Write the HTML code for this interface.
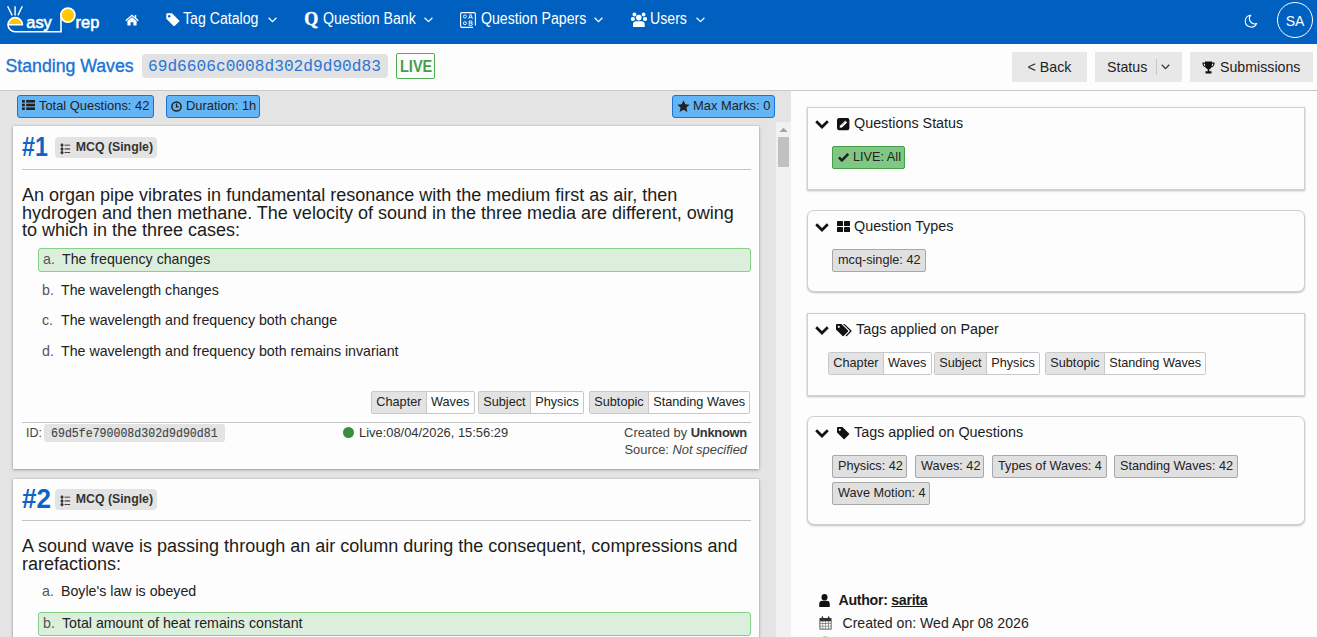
<!DOCTYPE html>
<html><head><meta charset="utf-8">
<style>
*{box-sizing:border-box;margin:0;padding:0}
html,body{width:1317px;height:637px;overflow:hidden;background:#fdfdfd;font-family:"Liberation Sans",sans-serif;color:#212121}
.abs{position:absolute}
.nav{position:absolute;left:0;top:0;width:1317px;height:44px;background:#0060c0;color:#fff}
.nav .t{position:absolute;top:10.6px;font-size:15.8px;line-height:16px;white-space:nowrap;transform:scaleX(0.895);transform-origin:0 0}
.chev{position:absolute;top:17px}
.hdr{position:absolute;left:0;top:44px;width:1317px;height:46px}
.left{position:absolute;left:0;top:90px;width:791px;height:547px;background:#e4e4e4;border-top:1px solid #c9c9c9}
.bdg{position:absolute;top:4px;height:23px;background:#64b5f6;border:1px solid #1a73d8;border-radius:3px;font-size:12.9px;line-height:19.6px;white-space:nowrap;color:#222}
.card{position:absolute;left:13px;width:746px;background:#fdfdfd;box-shadow:0 1px 3px rgba(0,0,0,.3),0 0 1px rgba(0,0,0,.25)}
.num{position:absolute;left:9px;font-weight:bold;font-size:28px;color:#0d63c8;line-height:28px;transform:scaleX(0.83);transform-origin:0 0}
.mcq{position:absolute;left:42px;width:102px;height:21px;background:#e3e3e3;border-radius:4px;font-weight:bold;font-size:12.3px;line-height:21px;color:#333;white-space:nowrap}
.hr{position:absolute;left:9px;width:729px;height:1px;background:#c4c4c4}
.q{position:absolute;left:9px;width:729px;font-size:18px;line-height:17.6px;color:#1c1c1c}
.opt{position:absolute;left:25px;width:713px;height:24px;font-size:14.2px;line-height:22px;white-space:nowrap;color:#222}
.opt.ok{background:#dcefdc;border:1px solid #86cf86;border-radius:3px}
.opt .l{position:absolute;left:4px;top:0;color:#555}
.opt .x{position:absolute;left:23px;top:0}
.opt.ok .l,.opt.ok .x{top:-1px}
.tg{position:absolute;top:0;height:23px;border:1px solid #c8c8c8;border-radius:2px;display:flex;font-size:12.7px;line-height:21px;white-space:nowrap;overflow:hidden}
.tg span{padding:0 4.3px;background:#fdfdfd}
.tg span:first-child{background:#e3e3e3;border-right:1px solid #c8c8c8}
.rc{position:absolute;left:807px;width:498px;background:#fdfdfd;border:1px solid #cfcfcf;box-shadow:0 1px 2px rgba(0,0,0,.25)}
.rc.rd{border-radius:7px}
.rt{position:absolute;top:7.3px;left:0;font-size:14.35px;line-height:17px;white-space:nowrap;color:#1c1c1c}
.gb{position:absolute;height:23px;background:#e0e0e0;border:1px solid #a8a8a8;border-radius:2px;font-size:12.7px;line-height:21px;white-space:nowrap;padding:0 5px;color:#222}
</style></head><body>

<!-- NAVBAR -->
<div class="nav">
  <svg class="abs" style="left:0;top:0" width="110" height="44" viewBox="0 0 110 44">
    <g stroke="#fff" stroke-width="1.4" fill="none" stroke-linecap="butt">
      <line x1="7.6" y1="6.2" x2="12.2" y2="15.4"/>
      <line x1="15.1" y1="6.2" x2="15.1" y2="15.4"/>
      <line x1="22.3" y1="6.2" x2="17.9" y2="15.4"/>
    </g>
    <path d="M8.2 24.6 A7 7 0 0 1 22.2 24.6 Z" fill="#ffc800"/>
    <path d="M8 24.8 A7.2 7.2 0 0 1 22.4 24.8 L8 24.8 A7.2 7.2 0 0 0 15.2 31.8 L61 31.8 L61 13" stroke="#fff" stroke-width="1.6" fill="none"/>
    <circle cx="67.9" cy="15.1" r="7" fill="#ffc800" stroke="#fff" stroke-width="1.8"/>
    <text x="26.3" y="27.6" font-family="Liberation Sans" font-size="16.4" fill="#fff" stroke="#fff" stroke-width="0.55">asy</text>
    <text x="75.6" y="27.6" font-family="Liberation Sans" font-size="16.4" fill="#fff" stroke="#fff" stroke-width="0.55">rep</text>
  </svg>
  <!-- home -->
  <svg class="abs" style="left:125px;top:14px" width="14" height="12" viewBox="0 0 14 12"><path d="M7 0.5 L0.3 6.3 L1.2 7.2 L7 2.3 L12.8 7.2 L13.7 6.3 L11.2 4.1 L11.2 1 L9.8 1 L9.8 2.9 Z M2.4 7 L7 3.2 L11.6 7 L11.6 11.6 L8.4 11.6 L8.4 8.2 L5.6 8.2 L5.6 11.6 L2.4 11.6 Z" fill="#fff"/></svg>
  <!-- tag -->
  <svg class="abs" style="left:166px;top:13px" width="14" height="13" viewBox="0 0 14 13"><path d="M0.3 1.6 Q0.3 0.3 1.6 0.3 L6 0.3 L13.2 7.5 Q13.7 8 13.2 8.6 L8.6 13 Q8 13.5 7.5 13 L0.3 5.8 Z" fill="#fff"/><circle cx="3.2" cy="3.2" r="1.2" fill="#0060c0"/></svg>
  <div class="t" style="left:183px">Tag Catalog</div>
  <svg class="chev" style="left:268px" width="9" height="6" viewBox="0 0 9 6"><path d="M0.6 0.8 L4.5 4.6 L8.4 0.8" stroke="#fff" stroke-width="1.3" fill="none"/></svg>
  <div class="abs" style="left:304.3px;top:8.5px;font-family:'Liberation Serif',serif;font-weight:bold;font-size:18px;line-height:20px;-webkit-text-stroke:0.4px #fff">Q</div>
  <div class="t" style="left:323px">Question Bank</div>
  <svg class="chev" style="left:424px" width="9" height="6" viewBox="0 0 9 6"><path d="M0.6 0.8 L4.5 4.6 L8.4 0.8" stroke="#fff" stroke-width="1.3" fill="none"/></svg>
  <!-- paper icon -->
  <svg class="abs" style="left:460px;top:12px" width="16" height="16" viewBox="0 0 16 16"><path d="M13 15.4 L2 15.4 Q0.6 15.4 0.6 14 L0.6 2 Q0.6 0.6 2 0.6 L14 0.6 Q15.4 0.6 15.4 2 L15.4 13.4" stroke="#fff" stroke-width="1.1" fill="none"/><circle cx="4.9" cy="4.5" r="1.5" stroke="#fff" stroke-width="0.9" fill="none"/><circle cx="4.9" cy="11.2" r="1.5" stroke="#fff" stroke-width="0.9" fill="none"/><path d="M8.8 6.8 L10.3 2.2 L10.9 2.2 L12.4 6.8 M9.3 5.3 L11.9 5.3" stroke="#fff" stroke-width="0.9" fill="none"/><path d="M9.2 9 L11 9 Q12.2 9 12.2 10 Q12.2 11 11 11 Q12.4 11 12.4 12.2 Q12.4 13.4 11 13.4 L9.2 13.4 Z M9.2 11 L11 11" stroke="#fff" stroke-width="0.9" fill="none"/></svg>
  <div class="t" style="left:480.5px">Question Papers</div>
  <svg class="chev" style="left:594px" width="9" height="6" viewBox="0 0 9 6"><path d="M0.6 0.8 L4.5 4.6 L8.4 0.8" stroke="#fff" stroke-width="1.3" fill="none"/></svg>
  <!-- users -->
  <svg class="abs" style="left:630px;top:12px" width="17" height="15" viewBox="0 0 17 15"><g fill="#fff"><circle cx="4.4" cy="2.5" r="1.9"/><circle cx="13.6" cy="2.5" r="1.9"/><ellipse cx="2.9" cy="6.9" rx="2.1" ry="2"/><ellipse cx="15" cy="6.9" rx="2.1" ry="2"/><circle cx="8.8" cy="5.6" r="2.8"/><path d="M3 14.4 L3 12.4 Q3 9.2 6.4 9.2 L11.3 9.2 Q14.7 9.2 14.7 12.4 L14.7 14.4 Q14.7 15 14.1 15 L3.6 15 Q3 15 3 14.4 Z"/></g></svg>
  <div class="t" style="left:650px">Users</div>
  <svg class="chev" style="left:695.5px" width="9" height="6" viewBox="0 0 9 6"><path d="M0.6 0.8 L4.5 4.6 L8.4 0.8" stroke="#fff" stroke-width="1.3" fill="none"/></svg>
  <!-- moon -->
  <svg class="abs" style="left:1244px;top:13.6px" width="14" height="14" viewBox="0 0 14 14"><path d="M6.8 1.2 A5.9 5.9 0 1 0 12.6 9.5 A5.2 5.2 0 0 1 6.8 1.2 Z" stroke="#fff" stroke-width="1.1" fill="none" stroke-linejoin="round"/></svg>
  <div class="abs" style="left:1277px;top:2px;width:36px;height:36px;border:1px solid #fff;border-radius:50%;font-size:14px;line-height:36px;text-align:center">SA</div>
</div>

<!-- HEADER -->
<div class="abs" style="left:5.5px;top:55px;font-size:17.7px;line-height:22px;color:#1a73d6;-webkit-text-stroke:0.35px #1a73d6;white-space:nowrap">Standing Waves</div>
<div class="abs" style="left:142px;top:54px;width:246px;height:24px;background:#e2e2e2;border-radius:4px"><span class="abs" style="left:6.3px;top:0;font-family:'Liberation Mono',monospace;font-size:17.4px;line-height:25.5px;color:#2a76d6;transform:scaleX(0.93);transform-origin:0 0;white-space:nowrap">69d6606c0008d302d9d90d83</span></div>
<div class="abs" style="left:396px;top:53px;width:39px;height:26px;border:1px solid #4caf50;border-radius:2px"><span class="abs" style="left:3px;top:1.5px;font-weight:bold;font-size:16.6px;line-height:22px;color:#43a047;transform:scaleX(0.875);transform-origin:0 0">LIVE</span></div>
<div class="abs" style="left:1012px;top:52px;width:75px;height:30px;background:#e8e8e8;font-size:14.2px;line-height:30px;text-align:center;color:#222">&lt; Back</div>
<div class="abs" style="left:1095px;top:52px;width:87px;height:30px;background:#e8e8e8;font-size:14.2px;line-height:30px;color:#222"><span class="abs" style="left:12px;top:0">Status</span><span class="abs" style="left:61px;top:7px;width:1px;height:16px;background:#c6c6c6"></span><svg class="abs" style="left:66px;top:12px" width="9" height="6" viewBox="0 0 9 6"><path d="M0.8 0.8 L4.5 4.6 L8.2 0.8" stroke="#333" stroke-width="1.3" fill="none"/></svg></div>
<div class="abs" style="left:1190px;top:52px;width:123px;height:30px;background:#e8e8e8;font-size:14.2px;line-height:30px;color:#222"><svg class="abs" style="left:12px;top:9px" width="13" height="13" viewBox="0 0 13 13"><path d="M3 0.5 L10 0.5 L10 1.5 L12.6 1.5 Q12.8 5.6 9.3 6.4 Q8.5 8 7.3 8.3 L7.3 10.3 L9.5 10.3 L9.5 12.5 L3.5 12.5 L3.5 10.3 L5.7 10.3 L5.7 8.3 Q4.5 8 3.7 6.4 Q0.2 5.6 0.4 1.5 L3 1.5 Z M1.6 2.7 Q1.8 4.7 3.2 5.2 L3 2.7 Z M11.4 2.7 L10 2.7 L9.8 5.2 Q11.2 4.7 11.4 2.7 Z" fill="#111"/></svg><span class="abs" style="left:30px;top:0">Submissions</span></div>

<div class="abs" style="left:0;top:90px;width:1317px;height:1px;background:#c9c9c9"></div>
<!-- LEFT PANEL -->
<div class="left">
  <div class="bdg" style="left:17px;width:137px"><svg class="abs" style="left:4px;top:4px" width="13" height="10" viewBox="0 0 13 10"><g fill="#222"><rect x="0" y="0" width="2.8" height="2.6"/><rect x="0" y="3.7" width="2.8" height="2.6"/><rect x="0" y="7.4" width="2.8" height="2.6"/><rect x="4.2" y="0" width="8.8" height="2.6"/><rect x="4.2" y="3.7" width="8.8" height="2.6"/><rect x="4.2" y="7.4" width="8.8" height="2.6"/></g></svg><span class="abs" style="left:21px;top:0">Total Questions: 42</span></div>
  <div class="bdg" style="left:166px;width:94px"><svg class="abs" style="left:4px;top:5px" width="11" height="11" viewBox="0 0 11 11"><circle cx="5.5" cy="5.5" r="4.6" stroke="#222" stroke-width="1.5" fill="none"/><path d="M5.5 2.6 L5.5 5.8 L7.6 5.8" stroke="#222" stroke-width="1.3" fill="none"/></svg><span class="abs" style="left:19px;top:0">Duration: 1h</span></div>
  <div class="bdg" style="left:672px;width:103px"><svg class="abs" style="left:4px;top:4px" width="13" height="13" viewBox="0 0 13 13"><path d="M6.5 0.3 L8.3 4.3 L12.7 4.7 L9.4 7.6 L10.4 12 L6.5 9.7 L2.6 12 L3.6 7.6 L0.3 4.7 L4.7 4.3 Z" fill="#222"/></svg><span class="abs" style="left:20px;top:0">Max Marks: 0</span></div>

  <!-- scroll area clip -->
  <div class="abs" style="left:0;top:31px;width:791px;height:516px;overflow:hidden">
    <!-- scrollbar -->
    <div class="abs" style="left:776px;top:0;width:15px;height:516px;background:#f1f1f1"></div>
    <svg class="abs" style="left:779px;top:5px" width="9" height="6" viewBox="0 0 9 6"><path d="M0.5 5 L4.5 0.8 L8.5 5 Z" fill="#a3a3a3"/></svg>
    <div class="abs" style="left:778px;top:15px;width:11px;height:30px;background:#c1c1c1"></div>

    <!-- CARD 1 (top at 126 abs => 126-122=4) -->
    <div class="card" style="top:4px;height:343px">
      <div class="num" style="top:6.7px">#1</div>
      <div class="mcq" style="top:11px"><svg class="abs" style="left:4.5px;top:5.5px" width="11" height="12" viewBox="0 0 11 12"><g fill="#333"><circle cx="2" cy="2.1" r="1.5"/><circle cx="2" cy="5.9" r="1.5"/><circle cx="2" cy="9.6" r="1.5"/><rect x="1.6" y="0.5" width="0.8" height="10.8"/><rect x="4.5" y="1.7" width="5.6" height="0.9"/><rect x="4.5" y="5.4" width="5.6" height="1.1"/><rect x="4.5" y="9.1" width="5.6" height="0.9"/></g></svg><span class="abs" style="left:20.8px;top:0">MCQ (Single)</span></div>
      <div class="hr" style="top:43px"></div>
      <div class="q" style="top:61px">An organ pipe vibrates in fundamental resonance with the medium first as air, then hydrogen and then methane. The velocity of sound in the three media are different, owing to which in the three cases:</div>
      <div class="opt ok" style="top:122px"><span class="l">a.</span><span class="x">The frequency changes</span></div>
      <div class="opt" style="top:153px"><span class="l">b.</span><span class="x">The wavelength changes</span></div>
      <div class="opt" style="top:183px"><span class="l">c.</span><span class="x">The wavelength and frequency both change</span></div>
      <div class="opt" style="top:214px"><span class="l">d.</span><span class="x">The wavelength and frequency both remains invariant</span></div>
      <div class="tg" style="left:358px;top:265px"><span>Chapter</span><span>Waves</span></div>
      <div class="tg" style="left:465px;top:265px"><span>Subject</span><span>Physics</span></div>
      <div class="tg" style="left:576px;top:265px"><span>Subtopic</span><span>Standing Waves</span></div>
      <div class="hr" style="top:296px"></div>
      <div class="abs" style="left:13px;top:299px;font-size:12.5px;line-height:17px;color:#444">ID:</div>
      <div class="abs" style="left:31px;top:298px;width:181px;height:18px;background:#e3e3e3;border-radius:3px"><span class="abs" style="left:6.5px;top:0;font-family:'Liberation Mono',monospace;font-size:13.3px;line-height:19px;color:#444;-webkit-text-stroke:0.15px #444;transform:scaleX(0.87);transform-origin:0 0;white-space:nowrap">69d5fe790008d302d9d90d81</span></div>
      <div class="abs" style="left:330px;top:301px;width:11px;height:11px;border-radius:50%;background:#388e3c"></div>
      <div class="abs" style="left:346px;top:298px;font-size:12.9px;line-height:17px;color:#333;white-space:nowrap">Live:08/04/2026, 15:56:29</div>
      <div class="abs" style="right:12px;top:298px;font-size:12.9px;line-height:17px;color:#444;white-space:nowrap;text-align:right">Created by <b style="color:#333;letter-spacing:-0.25px">Unknown</b><br>Source: <i>Not specified</i></div>
    </div>

    <!-- CARD 2 -->
    <div class="card" style="top:357px;height:200px">
      <div class="num" style="top:5.8px;transform:scaleX(0.93)">#2</div>
      <div class="mcq" style="top:10px"><svg class="abs" style="left:4.5px;top:5.5px" width="11" height="12" viewBox="0 0 11 12"><g fill="#333"><circle cx="2" cy="2.1" r="1.5"/><circle cx="2" cy="5.9" r="1.5"/><circle cx="2" cy="9.6" r="1.5"/><rect x="1.6" y="0.5" width="0.8" height="10.8"/><rect x="4.5" y="1.7" width="5.6" height="0.9"/><rect x="4.5" y="5.4" width="5.6" height="1.1"/><rect x="4.5" y="9.1" width="5.6" height="0.9"/></g></svg><span class="abs" style="left:20.8px;top:0">MCQ (Single)</span></div>
      <div class="hr" style="top:41px"></div>
      <div class="q" style="top:59px">A sound wave is passing through an air column during the consequent, compressions and rarefactions:</div>
      <div class="opt" style="top:101px"><span class="l">a.</span><span class="x">Boyle's law is obeyed</span></div>
      <div class="opt ok" style="top:133px"><span class="l">b.</span><span class="x">Total amount of heat remains constant</span></div>
    </div>
  </div>
</div>

<!-- RIGHT PANEL -->
<div class="rc" style="top:107px;height:83px">
  <svg class="abs" style="left:7px;top:11.6px" width="14" height="9" viewBox="0 0 14 9"><path d="M1.2 1.3 L7 7 L12.8 1.3" stroke="#111" stroke-width="2.7" fill="none"/></svg>
  <svg class="abs" style="left:29px;top:9.8px" width="13" height="13" viewBox="0 0 13 13"><rect x="0" y="0" width="12.4" height="12.2" rx="2.2" fill="#111"/><path d="M2.6 9.8 L3.1 7.6 L8.2 2.5 L10.1 4.4 L5 9.5 Z" fill="#fff"/><path d="M4.2 7.3 L8.4 3.1" stroke="#111" stroke-width="0.5"/></svg>
  <div class="rt" style="left:46px">Questions Status</div>
  <div class="gb" style="left:24px;top:38px;width:73px;background:#81c784;border-color:#43a047"><svg class="abs" style="left:5px;top:6px" width="11" height="9" viewBox="0 0 11 9"><path d="M0.9 4.3 L3.9 7.3 L10.3 0.9" stroke="#222" stroke-width="2.6" fill="none"/></svg><span class="abs" style="left:20px;top:0">LIVE: All</span></div>
</div>
<div class="rc rd" style="top:210px;height:82px">
  <svg class="abs" style="left:7px;top:11.6px" width="14" height="9" viewBox="0 0 14 9"><path d="M1.2 1.3 L7 7 L12.8 1.3" stroke="#111" stroke-width="2.7" fill="none"/></svg>
  <svg class="abs" style="left:29px;top:10px" width="13" height="12" viewBox="0 0 13 12"><g fill="#111"><rect x="0" y="0" width="6" height="5" rx="0.6"/><rect x="7" y="0" width="6" height="5" rx="0.6"/><rect x="0" y="6" width="6" height="5" rx="0.6"/><rect x="7" y="6" width="6" height="5" rx="0.6"/></g></svg>
  <div class="rt" style="left:46px">Question Types</div>
  <div class="gb" style="left:24px;top:38px;width:94px">mcq-single: 42</div>
</div>
<div class="rc" style="top:313px;height:83px">
  <svg class="abs" style="left:7px;top:11.6px" width="14" height="9" viewBox="0 0 14 9"><path d="M1.2 1.3 L7 7 L12.8 1.3" stroke="#111" stroke-width="2.7" fill="none"/></svg>
  <svg class="abs" style="left:28px;top:10px" width="17" height="13" viewBox="0 0 17 13"><path d="M0 1 Q0 0 1 0 L5.4 0 L12 6.6 Q12.5 7.1 12 7.6 L7.6 12 Q7.1 12.5 6.6 12 L0 5.4 Z" fill="#111"/><circle cx="2.8" cy="2.8" r="1.1" fill="#fdfdfd"/><path d="M7 0 L8.6 0 L15.4 6.6 Q15.9 7.1 15.4 7.6 L11 12 Q10.5 12.5 10 12 L9.6 11.6 L13.6 7.6 Q14.1 7.1 13.6 6.6 Z" fill="#111"/></svg>
  <div class="rt" style="left:48px">Tags applied on Paper</div>
  <div class="tg" style="left:20px;top:38px"><span>Chapter</span><span>Waves</span></div>
  <div class="tg" style="left:126px;top:38px"><span>Subject</span><span>Physics</span></div>
  <div class="tg" style="left:237px;top:38px"><span>Subtopic</span><span>Standing Waves</span></div>
</div>
<div class="rc rd" style="top:416px;height:109px">
  <svg class="abs" style="left:7px;top:11.6px" width="14" height="9" viewBox="0 0 14 9"><path d="M1.2 1.3 L7 7 L12.8 1.3" stroke="#111" stroke-width="2.7" fill="none"/></svg>
  <svg class="abs" style="left:28.5px;top:10px" width="14" height="13" viewBox="0 0 14 13"><path d="M0 1 Q0 0 1 0 L5.4 0 L12 6.6 Q12.5 7.1 12 7.6 L7.6 12 Q7.1 12.5 6.6 12 L0 5.4 Z" fill="#111"/><circle cx="2.8" cy="2.8" r="1.1" fill="#fdfdfd"/></svg>
  <div class="rt" style="left:46px">Tags applied on Questions</div>
  <div class="gb" style="left:24px;top:38px;width:75px">Physics: 42</div>
  <div class="gb" style="left:107px;top:38px;width:69px">Waves: 42</div>
  <div class="gb" style="left:184px;top:38px;width:115px">Types of Waves: 4</div>
  <div class="gb" style="left:306px;top:38px;width:124px">Standing Waves: 42</div>
  <div class="gb" style="left:24px;top:65px;width:98px">Wave Motion: 4</div>
</div>

<!-- author -->
<svg class="abs" style="left:818.5px;top:593.5px" width="11" height="13" viewBox="0 0 11 13"><ellipse cx="5.5" cy="3.2" rx="3" ry="3.2" fill="#111"/><path d="M0.2 12.6 L0.2 10.2 Q0.2 6.8 3.4 6.8 L7.6 6.8 Q10.8 6.8 10.8 10.2 L10.8 12.6 Q10.8 13 10.4 13 L0.6 13 Q0.2 13 0.2 12.6 Z" fill="#111"/></svg>
<div class="abs" style="left:838.5px;top:591.5px;font-size:14.2px;letter-spacing:-0.3px;line-height:17px;font-weight:bold;color:#1a1a1a;white-space:nowrap">Author: <u>sarita</u></div>
<svg class="abs" style="left:819px;top:616px" width="13" height="14" viewBox="0 0 13 14"><rect x="0.5" y="2" width="12" height="11.5" fill="#333" rx="0.6"/><g fill="#fdfdfd"><rect x="1.3" y="5.3" width="2.4" height="2.1"/><rect x="4.1" y="5.3" width="2.4" height="2.1"/><rect x="6.9" y="5.3" width="2.4" height="2.1"/><rect x="9.7" y="5.3" width="2.1" height="2.1"/><rect x="1.3" y="7.8" width="2.4" height="2.1"/><rect x="4.1" y="7.8" width="2.4" height="2.1"/><rect x="6.9" y="7.8" width="2.4" height="2.1"/><rect x="9.7" y="7.8" width="2.1" height="2.1"/><rect x="1.3" y="10.3" width="2.4" height="2.4"/><rect x="4.1" y="10.3" width="2.4" height="2.4"/><rect x="6.9" y="10.3" width="2.4" height="2.4"/><rect x="9.7" y="10.3" width="2.1" height="2.4"/></g><rect x="2.6" y="0.2" width="1.6" height="3.2" rx="0.7" fill="#333"/><rect x="8.8" y="0.2" width="1.6" height="3.2" rx="0.7" fill="#333"/></svg>
<div class="abs" style="left:842.5px;top:614.5px;font-size:14.1px;line-height:17px;color:#222;white-space:nowrap">Created on: Wed Apr 08 2026</div>
<div class="abs" style="left:822px;top:635.5px;width:6px;height:6px;border-radius:50%;background:#9ad29c"></div>

</body></html>
